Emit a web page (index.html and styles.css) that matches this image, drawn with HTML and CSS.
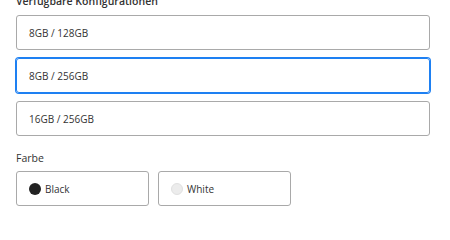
FILE: index.html
```html
<!DOCTYPE html>
<html lang="de">
<head>
<meta charset="utf-8">
<link rel="stylesheet" href="styles.css">
</head>
<body>
<div class="page">
  <div class="section">
    <div class="label label-top">Verfügbare Konfigurationen</div>
    <div class="options">
      <div class="option">8GB / 128GB</div>
      <div class="option selected">8GB / 256GB</div>
      <div class="option">16GB / 256GB</div>
    </div>
  </div>
  <div class="section colors-section">
    <div class="label">Farbe</div>
    <div class="colors">
      <div class="color"><span class="dot dot-black"></span>Black</div>
      <div class="color"><span class="dot dot-white"></span>White</div>
    </div>
  </div>
</div>
</body>
</html>
```
FILE: styles.css
```css
html, body {
  margin: 0;
  padding: 0;
  background: #fff;
}
body {
  font-family: "Open Sans", "Noto Sans", sans-serif;
  color: #333;
  width: 450px;
  height: 227px;
  overflow: hidden;
}
.page {
  padding: 0 20px 0 16px;
  margin-top: -6px;
}
.label {
  font-size: 10.5px;
  line-height: 15px;
  color: #333;
}
.label-top {
  font-weight: 600;
  margin-bottom: 6px;
}
.options {
  display: flex;
  flex-direction: column;
  gap: 8px;
  width: 414px;
}
.option {
  box-sizing: border-box;
  height: 35px;
  border: 1px solid #a9a9a9;
  border-radius: 3px;
  display: flex;
  align-items: center;
  padding-left: 12px;
  font-size: 10px;
  color: #333;
}
.option.selected {
  border-color: #1e80f2;
  box-shadow: 0 0 0 1px #1e80f2;
}
.colors-section {
  margin-top: 15px;
}
.colors-section .label {
  margin-bottom: 5px;
}
.colors {
  display: flex;
  gap: 9px;
}
.color {
  box-sizing: border-box;
  width: 133px;
  height: 35px;
  border: 1px solid #a9a9a9;
  border-radius: 3px;
  display: flex;
  align-items: center;
  padding-left: 12px;
  font-size: 10px;
  color: #333;
}
.dot {
  width: 12px;
  height: 12px;
  border-radius: 50%;
  margin-right: 4px;
  box-sizing: border-box;
}
.dot-black {
  background: #222;
}
.dot-white {
  background: #ececec;
  border: 1px solid #e0e0e0;
}
```
